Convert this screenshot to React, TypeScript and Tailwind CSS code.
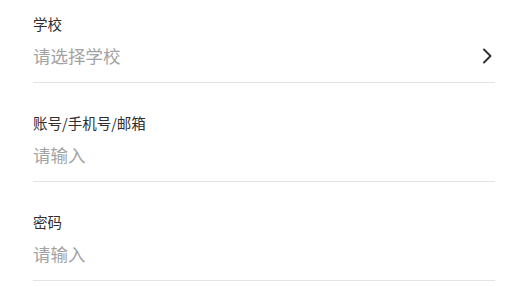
const fields = [
  { label: "学校", placeholder: "请选择学校", select: true },
  { label: "账号/手机号/邮箱", placeholder: "请输入", select: false },
  { label: "密码", placeholder: "请输入", select: false },
];

export default function App() {
  return (
    <div
      className="min-h-screen bg-white pl-[33px] pr-[26px] pt-[14px]"
      style={{ fontFamily: '"Noto Sans CJK SC", "Noto Sans", sans-serif' }}
    >
      <div className="flex flex-col gap-[30px]">
        {fields.map((f) => (
          <div key={f.label} className="border-b border-[#e3e3e3] pb-[10px]">
            <p className="text-[14.5px] leading-[20px] text-[#2f2f2f]">{f.label}</p>
            <div className="mt-[6px] flex h-[32px] items-center justify-between">
              <span className="text-[17.5px] text-[#a3a3a3]">{f.placeholder}</span>
              {f.select && (
                <svg
                  width="10"
                  height="16"
                  viewBox="0 0 10 16"
                  fill="none"
                  stroke="#333"
                  strokeWidth="2"
                  strokeLinecap="round"
                  strokeLinejoin="round"
                  className="mr-[3px]"
                >
                  <path d="M2 1.5 L8.5 8 L2 14.5" />
                </svg>
              )}
            </div>
          </div>
        ))}
      </div>
    </div>
  );
}
